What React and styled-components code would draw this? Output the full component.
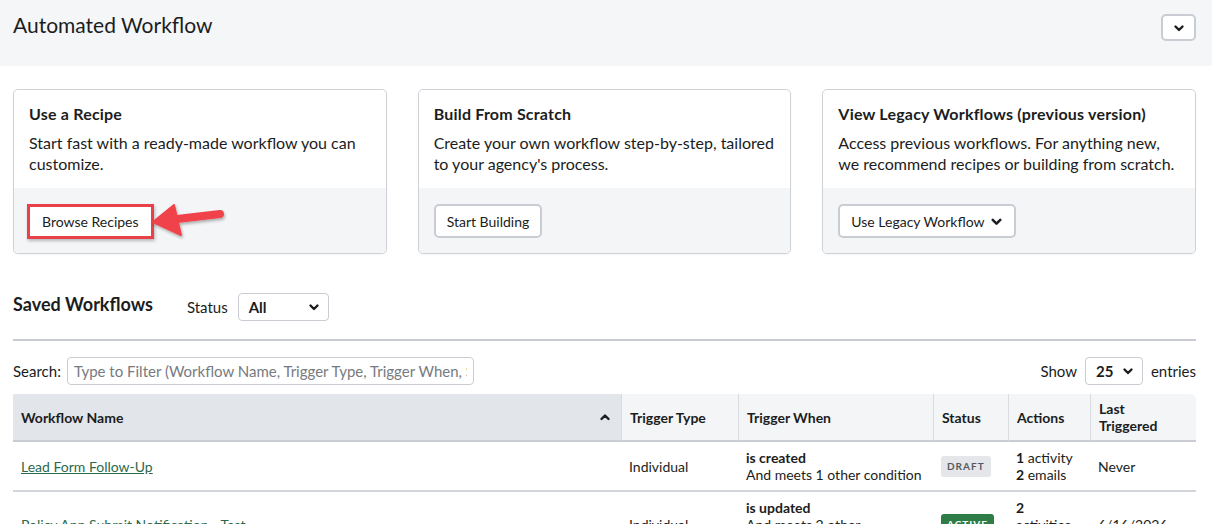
import React from "react";
import styled, { createGlobalStyle } from "styled-components";

const GlobalStyle = createGlobalStyle`
  * { box-sizing: border-box; }
  body {
    margin: 0;
    background: #fff;
    font-family: Lato, "Noto Sans", sans-serif;
    color: #1b1d21;
  }
`;

const Chevron = ({ up, size = 12, width = 2.4 }) => (
  <svg width={size} height={size} viewBox="0 0 12 12" fill="none">
    <path
      d={up ? "M2.5 8 L6 4.5 L9.5 8" : "M2.5 4.5 L6 8 L9.5 4.5"}
      stroke="#1b1d21"
      strokeWidth={width}
      strokeLinecap="round"
      strokeLinejoin="round"
    />
  </svg>
);

export default function App() {
  const cards = [
    {
      title: "Use a Recipe",
      text: "Start fast with a ready-made workflow you can customize.",
      button: "Browse Recipes",
      highlight: true,
    },
    {
      title: "Build From Scratch",
      text: "Create your own workflow step-by-step, tailored to your agency's process.",
      button: "Start Building",
    },
    {
      title: "View Legacy Workflows (previous version)",
      text: "Access previous workflows. For anything new, we recommend recipes or building from scratch.",
      button: "Use Legacy Workflow",
      menu: true,
    },
  ];

  const rows = [
    {
      name: "Lead Form Follow-Up",
      type: "Individual",
      event: "is created",
      condition: "And meets 1 other condition",
      status: "DRAFT",
      actions: [
        ["1", "activity"],
        ["2", "emails"],
      ],
      last: "Never",
    },
    {
      name: "Policy App Submit Notification - Test",
      type: "Individual",
      event: "is updated",
      condition: "And meets 2 other conditions",
      status: "ACTIVE",
      actions: [
        ["2", "activities"],
        ["1", "email"],
      ],
      last: "6/16/2026",
    },
  ];

  return (
    <>
      <GlobalStyle />
      <Header>
        <Title>Automated Workflow</Title>
        <Toggle>
          <Chevron />
        </Toggle>
      </Header>
      <Main>
        <Cards>
          {cards.map((c) => (
            <Card key={c.title}>
              <CardBody>
                <CardTitle>{c.title}</CardTitle>
                <CardText>{c.text}</CardText>
              </CardBody>
              <CardFooter>
                <Button $highlight={c.highlight}>
                  {c.button}
                  {c.menu && <Chevron size={13} />}
                </Button>
                {c.highlight && (
                  <Arrow width="90" height="50" viewBox="0 0 90 50">
                    <defs>
                      <filter id="sh" x="-20%" y="-20%" width="140%" height="160%">
                        <feDropShadow dx="1" dy="2" stdDeviation="1.5" floodOpacity="0.3" />
                      </filter>
                    </defs>
                    <g filter="url(#sh)" fill="#f0434b" stroke="#f0434b">
                      <line x1="26" y1="22" x2="69" y2="17" strokeWidth="8" strokeLinecap="round" />
                      <polygon points="2,25 23,8 30,38" strokeWidth="2" strokeLinejoin="round" />
                    </g>
                  </Arrow>
                )}
              </CardFooter>
            </Card>
          ))}
        </Cards>

        <SectionHead>
          <SectionTitle>Saved Workflows</SectionTitle>
          <Label>Status</Label>
          <Select $w={91}>
            <span>All</span>
            <Chevron size={12} />
          </Select>
        </SectionHead>
        <Divider />

        <Toolbar>
          <Label>Search:</Label>
          <SearchInput placeholder="Type to Filter (Workflow Name, Trigger Type, Trigger When, Status)" />
          <Spacer />
          <Label>Show</Label>
          <Select $w={58}>
            <span>25</span>
            <Chevron size={12} />
          </Select>
          <Label>entries</Label>
        </Toolbar>

        <Table>
          <colgroup>
            <col style={{ width: 608 }} />
            <col style={{ width: 117 }} />
            <col style={{ width: 195 }} />
            <col style={{ width: 75 }} />
            <col style={{ width: 82 }} />
            <col style={{ width: 106 }} />
          </colgroup>
          <thead>
            <tr>
              <Th $sorted>
                <SortHead>
                  Workflow Name
                  <Chevron up size={12} />
                </SortHead>
              </Th>
              <Th>Trigger Type</Th>
              <Th>Trigger When</Th>
              <Th>Status</Th>
              <Th>Actions</Th>
              <Th $last>Last Triggered</Th>
            </tr>
          </thead>
          <tbody>
            {rows.map((r) => (
              <tr key={r.name}>
                <Td><NameLink href="#">{r.name}</NameLink></Td>
                <Td>{r.type}</Td>
                <Td>
                  <b>{r.event}</b>
                  <br />
                  {r.condition}
                </Td>
                <Td><Badge $active={r.status === "ACTIVE"}>{r.status}</Badge></Td>
                <Td>
                  {r.actions.map(([n, label], i) => (
                    <div key={i}>
                      <b>{n}</b> {label}
                    </div>
                  ))}
                </Td>
                <Td>{r.last}</Td>
              </tr>
            ))}
          </tbody>
        </Table>
      </Main>
    </>
  );
}

const Header = styled.header`
  height: 66px;
  background: #f5f6f8;
  display: flex;
  align-items: flex-start;
  justify-content: space-between;
  padding: 12px 16px 0 13px;
`;

const Title = styled.h1`
  margin: 0;
  font-size: 21px;
  line-height: 26px;
  font-weight: 400;
`;

const Toggle = styled.button`
  width: 35px;
  height: 27px;
  margin-top: 2px;
  background: #fff;
  border: 2px solid #c9ccd2;
  border-radius: 5px;
  display: flex;
  align-items: center;
  justify-content: center;
  padding: 0;
`;

const Main = styled.main`
  padding: 23px 16px 0 13px;
`;

const Cards = styled.div`
  display: grid;
  grid-template-columns: repeat(3, 1fr);
  gap: 31px;
`;

const Card = styled.div`
  border: 1px solid #ced1d6;
  border-radius: 5px;
  height: 165px;
  display: flex;
  flex-direction: column;
  box-shadow: 0 1px 2px rgba(0, 0, 0, 0.04);
`;

const CardBody = styled.div`
  flex: 1;
  padding: 14px 15px 0 15px;
  background: #fff;
  border-radius: 5px 5px 0 0;
`;

const CardTitle = styled.h3`
  margin: 0 0 8px;
  font-size: 16px;
  line-height: 20px;
  font-weight: 700;
  letter-spacing: 0.2px;
`;

const CardText = styled.p`
  margin: 0;
  font-size: 16px;
  line-height: 21px;
`;

const CardFooter = styled.div`
  position: relative;
  height: 65px;
  background: #f4f5f7;
  padding: 16px 15px 0;
  border-radius: 0 0 5px 5px;
`;

const Button = styled.button`
  height: ${(p) => (p.$highlight ? "35px" : "34px")};
  padding: 0 ${(p) => (p.$highlight ? "12px" : "11px")};
  font-family: inherit;
  font-size: 14px;
  color: #1b1d21;
  background: #fff;
  border-style: solid;
  border-color: ${(p) => (p.$highlight ? "#e8414a" : "#c9ccd2")};
  border-width: ${(p) => (p.$highlight ? "3px" : "2px")};
  border-radius: ${(p) => (p.$highlight ? "0" : "5px")};
  box-shadow: ${(p) => (p.$highlight ? "1px 2px 3px rgba(0,0,0,0.25)" : "none")};
  display: inline-flex;
  align-items: center;
  gap: 5px;
  margin-left: ${(p) => (p.$highlight ? "-2px" : "0")};
`;

const Arrow = styled.svg`
  position: absolute;
  left: 137px;
  top: 9px;
  overflow: visible;
`;

const SectionHead = styled.div`
  display: flex;
  align-items: center;
  gap: 10px;
  margin-top: 39px;
  height: 28px;
`;

const SectionTitle = styled.h2`
  margin: 0 24px 0 0;
  font-size: 18px;
  line-height: 22px;
  font-weight: 700;
  position: relative;
  top: -3px;
`;

const Label = styled.span`
  font-size: 15px;
  white-space: nowrap;
`;

const Select = styled.div`
  width: ${(p) => p.$w}px;
  height: 28px;
  border: 1px solid #c9ccd2;
  border-radius: 4px;
  display: flex;
  align-items: center;
  justify-content: space-between;
  padding: 0 8px 0 10px;
  font-size: 15px;
  font-weight: 700;
  background: #fff;
`;

const Divider = styled.hr`
  margin: 18px 0 0;
  border: 0;
  border-top: 2px solid #c8cbd0;
`;

const Toolbar = styled.div`
  display: flex;
  align-items: center;
  gap: 8px;
  margin-top: 16px;
  height: 28px;
`;

const SearchInput = styled.input`
  width: 407px;
  height: 28px;
  border: 1px solid #c9ccd2;
  border-radius: 4px;
  padding: 0 6px;
  font-family: inherit;
  font-size: 15px;
  margin-left: -2px;
  &::placeholder {
    color: #777a80;
  }
`;

const Spacer = styled.div`
  flex: 1;
`;

const Table = styled.table`
  width: 100%;
  margin-top: 9px;
  border-collapse: separate;
  border-spacing: 0;
  table-layout: fixed;
  font-size: 14px;
`;

const Th = styled.th`
  height: 48px;
  text-align: left;
  font-weight: 700;
  padding: 0 ${(p) => (p.$last ? "20px" : "8px")} 0 8px;
  line-height: 17px;
  background: ${(p) => (p.$sorted ? "#e2e5e9" : "#f4f5f7")};
  border-bottom: 2px solid #c9ccd2;
  border-left: ${(p) => (p.$sorted ? "0" : "1px solid #d8dbe0")};
  border-top-right-radius: ${(p) => (p.$last ? "6px" : "0")};
`;

const SortHead = styled.div`
  display: flex;
  align-items: center;
  justify-content: space-between;
  padding-right: 2px;
`;

const Td = styled.td`
  height: 49px;
  padding: 7px 8px;
  line-height: 17px;
  vertical-align: middle;
  border-bottom: 2px solid #d2d5da;
  b {
    font-weight: 700;
  }
`;

const NameLink = styled.a`
  color: #2b6a4c;
  text-decoration: underline;
`;

const Badge = styled.span`
  display: inline-block;
  font-size: 10px;
  font-weight: 700;
  letter-spacing: 1px;
  padding: 2px 6px;
  border-radius: 3px;
  color: ${(p) => (p.$active ? "#fff" : "#555a60")};
  background: ${(p) => (p.$active ? "#2f7d46" : "#e4e6e9")};
`;
